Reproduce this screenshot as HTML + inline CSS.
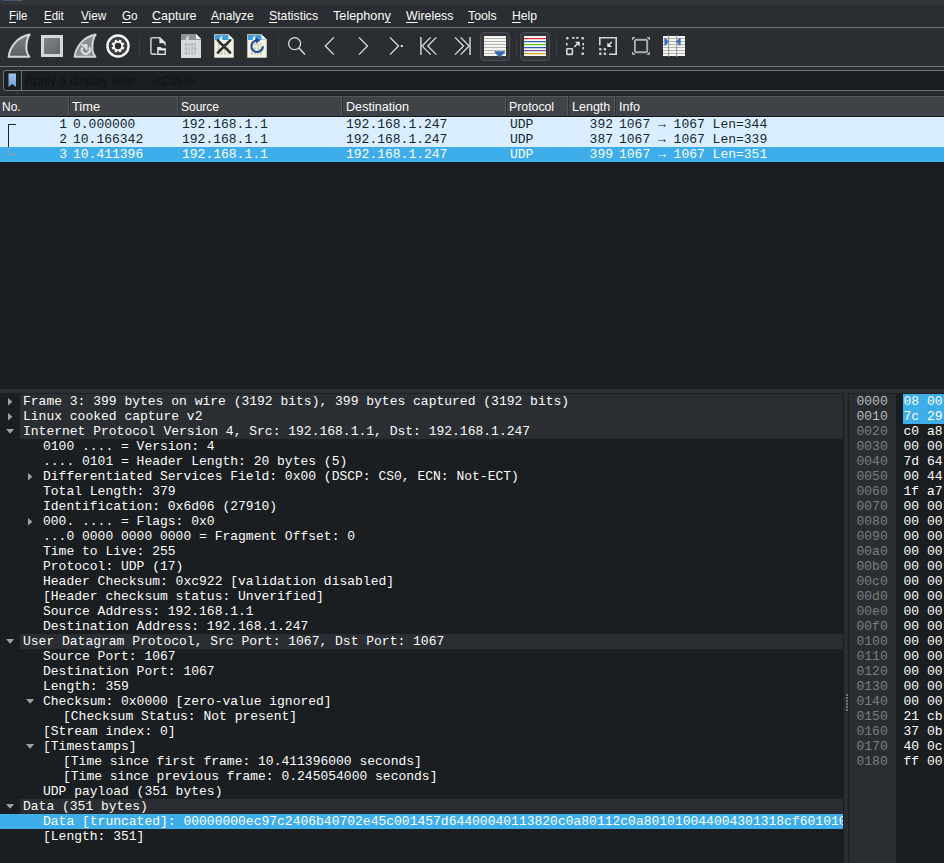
<!DOCTYPE html>
<html><head><meta charset="utf-8"><style>
*{margin:0;padding:0;box-sizing:border-box}
html,body{width:944px;height:863px;overflow:hidden;background:#2a2e32;}
body{position:relative;font-family:"Liberation Sans",sans-serif;font-size:13px;color:#fcfcfc}
.a{position:absolute}
.m{position:absolute;top:5px;height:22px;line-height:22px;white-space:pre;font-size:13.5px;transform-origin:0 0}
.m u{text-decoration:underline;text-underline-offset:2px}
.mono{font-family:"Liberation Mono",monospace;font-size:13px;white-space:pre;line-height:15px}
.h{position:absolute;top:97px;height:19px;line-height:19px;white-space:pre;font-size:13.5px;transform-origin:0 0}
.hs{position:absolute;top:96px;width:1px;height:20px;background:#53575b;box-shadow:1px 0 0 #303337}
.r{position:absolute;left:0;width:944px;height:15px}
.c{position:absolute;top:0;line-height:15px;font-family:"Liberation Mono",monospace;white-space:pre}
.t{position:absolute;left:0;height:15px;line-height:15px;font-family:"Liberation Mono",monospace;white-space:pre}
</style></head><body>
<div class="a" style="left:0;top:0;width:944px;height:5px;background:#31363b"></div>
<div class="a" style="left:3px;top:0;width:19px;height:1px;background:linear-gradient(90deg,#46597a,#44587c 45%,#545a68 55%,#565a64)"></div>
<div class="a" style="left:0;top:27px;width:944px;height:1px;background:#6e7276"></div>
<div class="a" style="left:0;top:66px;width:944px;height:1px;background:#6e7276"></div>

<div class="m" style="left:9.44px;transform:scaleX(0.8488)"><u>F</u>ile</div>
<div class="m" style="left:43.77px;transform:scaleX(0.8502)"><u>E</u>dit</div>
<div class="m" style="left:81.09px;transform:scaleX(0.8667)"><u>V</u>iew</div>
<div class="m" style="left:121.79px;transform:scaleX(0.8650)"><u>G</u>o</div>
<div class="m" style="left:151.61px;transform:scaleX(0.9272)"><u>C</u>apture</div>
<div class="m" style="left:211.39px;transform:scaleX(0.8896)"><u>A</u>nalyze</div>
<div class="m" style="left:269.00px;transform:scaleX(0.9094)"><u>S</u>tatistics</div>
<div class="m" style="left:333.35px;transform:scaleX(0.9385)">Telephon<u>y</u></div>
<div class="m" style="left:406.00px;transform:scaleX(0.9154)"><u>W</u>ireless</div>
<div class="m" style="left:468.17px;transform:scaleX(0.9128)"><u>T</u>ools</div>
<div class="m" style="left:512.04px;transform:scaleX(0.9004)"><u>H</u>elp</div>
<div class="a" style="left:3px;top:70px;width:945px;height:21px;border:1px solid #6e7276;border-radius:3px;background:#1b1e20"></div>
<div class="a" style="left:21px;top:71px;width:1px;height:19px;background:#6e7276"></div>
<svg class="a" style="left:8px;top:73px" width="9" height="15" viewBox="0 0 9 15"><defs><linearGradient id="bm" x1="0" y1="0" x2="0" y2="1"><stop offset="0" stop-color="#9cc2ec"/><stop offset="1" stop-color="#6f9edb"/></linearGradient></defs><path d="M0.5 0.5H8V14L4.25 11L0.5 14Z" fill="url(#bm)"/></svg>
<div class="a" style="left:25.1px;top:70.5px;height:19px;line-height:19px;color:#101213;white-space:pre;font-size:13.5px;transform-origin:0 0;transform:scaleX(0.9167)">Apply a display filter … &lt;Ctrl-/&gt;</div>

<div class="a" style="left:0;top:95px;width:944px;height:1px;background:#1f2225"></div>
<div class="a" style="left:0;top:96px;width:944px;height:1px;background:#55595d"></div>
<div class="a" style="left:0;top:97px;width:944px;height:19px;background:#3f4347"></div>
<div class="a" style="left:0;top:116px;width:944px;height:1px;background:#141618"></div>
<div class="h" style="left:2.30px;transform:scaleX(0.8874)">No.</div>
<div class="hs" style="left:68px"></div>
<div class="h" style="left:71.70px;transform:scaleX(0.9518)">Time</div>
<div class="hs" style="left:177px"></div>
<div class="h" style="left:181.00px;transform:scaleX(0.8886)">Source</div>
<div class="hs" style="left:341px"></div>
<div class="h" style="left:345.53px;transform:scaleX(0.9346)">Destination</div>
<div class="hs" style="left:505px"></div>
<div class="h" style="left:509.23px;transform:scaleX(0.9106)">Protocol</div>
<div class="hs" style="left:567px"></div>
<div class="h" style="left:571.52px;transform:scaleX(0.9273)">Length</div>
<div class="hs" style="left:614px"></div>
<div class="h" style="left:618.50px;transform:scaleX(0.9384)">Info</div>
<div class="a" style="left:0;top:117px;width:944px;height:272px;background:#1b1e20"></div>
<div class="r" style="top:117px;background:#daeeff;color:#12272e"><div class="c" style="right:877px">1</div><div class="c" style="left:73px">0.000000</div><div class="c" style="left:182px">192.168.1.1</div><div class="c" style="left:346px">192.168.1.247</div><div class="c" style="left:510px">UDP</div><div class="c" style="right:331px">392</div><div class="c" style="left:619px">1067 → 1067 Len=344</div></div>
<div class="r" style="top:132px;background:#daeeff;color:#12272e"><div class="c" style="right:877px">2</div><div class="c" style="left:73px">10.166342</div><div class="c" style="left:182px">192.168.1.1</div><div class="c" style="left:346px">192.168.1.247</div><div class="c" style="left:510px">UDP</div><div class="c" style="right:331px">387</div><div class="c" style="left:619px">1067 → 1067 Len=339</div></div>
<div class="r" style="top:147px;background:#3daee9;color:#fcfcfc"><div class="c" style="right:877px">3</div><div class="c" style="left:73px">10.411396</div><div class="c" style="left:182px">192.168.1.1</div><div class="c" style="left:346px">192.168.1.247</div><div class="c" style="left:510px">UDP</div><div class="c" style="right:331px">399</div><div class="c" style="left:619px">1067 → 1067 Len=351</div></div>
<div class="a" style="left:8px;top:124px;width:8px;height:1px;background:#12272e"></div>
<div class="a" style="left:8px;top:124px;width:1px;height:23px;background:#12272e"></div>
<div class="a" style="left:8px;top:147px;width:1px;height:8px;background:#9a9a9a"></div>
<div class="a" style="left:8px;top:154px;width:8px;height:1px;background:#9a9a9a"></div>
<div class="a" style="left:0;top:389px;width:944px;height:5px;background:#2a2e32"></div>
<div class="a" style="left:0;top:393px;width:944px;height:1px;background:#1e2124"></div>
<div class="a" style="left:0;top:394px;width:843px;height:469px;background:#1b1e20;overflow:hidden">
<div class="a" style="left:20px;top:0px;width:823px;height:15px;background:#2a2e32"></div>
<svg class="a" style="left:8px;top:3.8px" width="6" height="8"><path d="M0 0L4.4 3.7L0 7.4Z" fill="#a0a2a4"/></svg>
<div class="t" style="left:23px;top:0px">Frame 3: 399 bytes on wire (3192 bits), 399 bytes captured (3192 bits)</div>
<div class="a" style="left:20px;top:15px;width:823px;height:15px;background:#2a2e32"></div>
<svg class="a" style="left:8px;top:18.8px" width="6" height="8"><path d="M0 0L4.4 3.7L0 7.4Z" fill="#a0a2a4"/></svg>
<div class="t" style="left:23px;top:15px">Linux cooked capture v2</div>
<div class="a" style="left:20px;top:30px;width:823px;height:15px;background:#2a2e32"></div>
<svg class="a" style="left:6px;top:34.8px" width="9" height="6"><path d="M0 0H8.2L4.1 4.8Z" fill="#a0a2a4"/></svg>
<div class="t" style="left:23px;top:30px">Internet Protocol Version 4, Src: 192.168.1.1, Dst: 192.168.1.247</div>
<div class="t" style="left:43px;top:45px">0100 .... = Version: 4</div>
<div class="t" style="left:43px;top:60px">.... 0101 = Header Length: 20 bytes (5)</div>
<svg class="a" style="left:28px;top:78.8px" width="6" height="8"><path d="M0 0L4.4 3.7L0 7.4Z" fill="#a0a2a4"/></svg>
<div class="t" style="left:43px;top:75px">Differentiated Services Field: 0x00 (DSCP: CS0, ECN: Not-ECT)</div>
<div class="t" style="left:43px;top:90px">Total Length: 379</div>
<div class="t" style="left:43px;top:105px">Identification: 0x6d06 (27910)</div>
<svg class="a" style="left:28px;top:123.8px" width="6" height="8"><path d="M0 0L4.4 3.7L0 7.4Z" fill="#a0a2a4"/></svg>
<div class="t" style="left:43px;top:120px">000. .... = Flags: 0x0</div>
<div class="t" style="left:43px;top:135px">...0 0000 0000 0000 = Fragment Offset: 0</div>
<div class="t" style="left:43px;top:150px">Time to Live: 255</div>
<div class="t" style="left:43px;top:165px">Protocol: UDP (17)</div>
<div class="t" style="left:43px;top:180px">Header Checksum: 0xc922 [validation disabled]</div>
<div class="t" style="left:43px;top:195px">[Header checksum status: Unverified]</div>
<div class="t" style="left:43px;top:210px">Source Address: 192.168.1.1</div>
<div class="t" style="left:43px;top:225px">Destination Address: 192.168.1.247</div>
<div class="a" style="left:20px;top:240px;width:823px;height:15px;background:#2a2e32"></div>
<svg class="a" style="left:6px;top:244.8px" width="9" height="6"><path d="M0 0H8.2L4.1 4.8Z" fill="#a0a2a4"/></svg>
<div class="t" style="left:23px;top:240px">User Datagram Protocol, Src Port: 1067, Dst Port: 1067</div>
<div class="t" style="left:43px;top:255px">Source Port: 1067</div>
<div class="t" style="left:43px;top:270px">Destination Port: 1067</div>
<div class="t" style="left:43px;top:285px">Length: 359</div>
<svg class="a" style="left:26px;top:304.8px" width="9" height="6"><path d="M0 0H8.2L4.1 4.8Z" fill="#a0a2a4"/></svg>
<div class="t" style="left:43px;top:300px">Checksum: 0x0000 [zero-value ignored]</div>
<div class="t" style="left:63px;top:315px">[Checksum Status: Not present]</div>
<div class="t" style="left:43px;top:330px">[Stream index: 0]</div>
<svg class="a" style="left:26px;top:349.8px" width="9" height="6"><path d="M0 0H8.2L4.1 4.8Z" fill="#a0a2a4"/></svg>
<div class="t" style="left:43px;top:345px">[Timestamps]</div>
<div class="t" style="left:63px;top:360px">[Time since first frame: 10.411396000 seconds]</div>
<div class="t" style="left:63px;top:375px">[Time since previous frame: 0.245054000 seconds]</div>
<div class="t" style="left:43px;top:390px">UDP payload (351 bytes)</div>
<div class="a" style="left:20px;top:405px;width:823px;height:15px;background:#2a2e32"></div>
<svg class="a" style="left:6px;top:409.8px" width="9" height="6"><path d="M0 0H8.2L4.1 4.8Z" fill="#a0a2a4"/></svg>
<div class="t" style="left:23px;top:405px">Data (351 bytes)</div>
<div class="a" style="left:0;top:420px;width:843px;height:15px;background:#3daee9"></div>
<div class="t" style="left:43px;top:420px">Data [truncated]: 00000000ec97c2406b40702e45c001457d64400040113820c0a80112c0a801010044004301318cf601010</div>
<div class="t" style="left:43px;top:435px">[Length: 351]</div>
</div>
<div class="a" style="left:843px;top:393px;width:6px;height:470px;background:#2a2e32;border-left:1px solid #1b1e20;border-right:1px solid #1e2124"></div>
<div class="a" style="left:846px;top:694px;width:2px;height:2px;background:#727476"></div>
<div class="a" style="left:846px;top:697px;width:2px;height:2px;background:#727476"></div>
<div class="a" style="left:846px;top:700px;width:2px;height:2px;background:#727476"></div>
<div class="a" style="left:846px;top:703px;width:2px;height:2px;background:#727476"></div>
<div class="a" style="left:846px;top:706px;width:2px;height:2px;background:#727476"></div>
<div class="a" style="left:846px;top:709px;width:2px;height:2px;background:#727476"></div>
<div class="a" style="left:849px;top:394px;width:95px;height:469px;background:#1b1e20"></div>
<div class="a" style="left:849px;top:394px;width:47px;height:469px;background:#2a2e32"></div>
<div class="a" style="left:903px;top:394px;width:41px;height:30px;background:#3daee9"></div>
<div class="t" style="left:856.5px;top:394px;color:#bcbec0">0000</div>
<div class="t" style="left:903.5px;top:394px">08 00 45 00</div>
<div class="t" style="left:856.5px;top:409px;color:#bcbec0">0010</div>
<div class="t" style="left:903.5px;top:409px">7c 29 40 00</div>
<div class="t" style="left:856.5px;top:424px;color:#7a7e82">0020</div>
<div class="t" style="left:903.5px;top:424px">c0 a8</div>
<div class="t" style="left:856.5px;top:439px;color:#7a7e82">0030</div>
<div class="t" style="left:903.5px;top:439px">00 00</div>
<div class="t" style="left:856.5px;top:454px;color:#7a7e82">0040</div>
<div class="t" style="left:903.5px;top:454px">7d 64</div>
<div class="t" style="left:856.5px;top:469px;color:#7a7e82">0050</div>
<div class="t" style="left:903.5px;top:469px">00 44</div>
<div class="t" style="left:856.5px;top:484px;color:#7a7e82">0060</div>
<div class="t" style="left:903.5px;top:484px">1f a7</div>
<div class="t" style="left:856.5px;top:499px;color:#7a7e82">0070</div>
<div class="t" style="left:903.5px;top:499px">00 00</div>
<div class="t" style="left:856.5px;top:514px;color:#7a7e82">0080</div>
<div class="t" style="left:903.5px;top:514px">00 00</div>
<div class="t" style="left:856.5px;top:529px;color:#7a7e82">0090</div>
<div class="t" style="left:903.5px;top:529px">00 00</div>
<div class="t" style="left:856.5px;top:544px;color:#7a7e82">00a0</div>
<div class="t" style="left:903.5px;top:544px">00 00</div>
<div class="t" style="left:856.5px;top:559px;color:#7a7e82">00b0</div>
<div class="t" style="left:903.5px;top:559px">00 00</div>
<div class="t" style="left:856.5px;top:574px;color:#7a7e82">00c0</div>
<div class="t" style="left:903.5px;top:574px">00 00</div>
<div class="t" style="left:856.5px;top:589px;color:#7a7e82">00d0</div>
<div class="t" style="left:903.5px;top:589px">00 00</div>
<div class="t" style="left:856.5px;top:604px;color:#7a7e82">00e0</div>
<div class="t" style="left:903.5px;top:604px">00 00</div>
<div class="t" style="left:856.5px;top:619px;color:#7a7e82">00f0</div>
<div class="t" style="left:903.5px;top:619px">00 00</div>
<div class="t" style="left:856.5px;top:634px;color:#7a7e82">0100</div>
<div class="t" style="left:903.5px;top:634px">00 00</div>
<div class="t" style="left:856.5px;top:649px;color:#7a7e82">0110</div>
<div class="t" style="left:903.5px;top:649px">00 00</div>
<div class="t" style="left:856.5px;top:664px;color:#7a7e82">0120</div>
<div class="t" style="left:903.5px;top:664px">00 00</div>
<div class="t" style="left:856.5px;top:679px;color:#7a7e82">0130</div>
<div class="t" style="left:903.5px;top:679px">00 00</div>
<div class="t" style="left:856.5px;top:694px;color:#7a7e82">0140</div>
<div class="t" style="left:903.5px;top:694px">00 00</div>
<div class="t" style="left:856.5px;top:709px;color:#7a7e82">0150</div>
<div class="t" style="left:903.5px;top:709px">21 cb</div>
<div class="t" style="left:856.5px;top:724px;color:#7a7e82">0160</div>
<div class="t" style="left:903.5px;top:724px">37 0b</div>
<div class="t" style="left:856.5px;top:739px;color:#7a7e82">0170</div>
<div class="t" style="left:903.5px;top:739px">40 0c</div>
<div class="t" style="left:856.5px;top:754px;color:#7a7e82">0180</div>
<div class="t" style="left:903.5px;top:754px">ff 00</div>
<svg class="a" style="left:0;top:28px" width="944" height="38" viewBox="0 28 944 38">
<defs>
<linearGradient id="gfin" x1="0" y1="0" x2="0" y2="1"><stop offset="0" stop-color="#7c8084"/><stop offset="1" stop-color="#5d6165"/></linearGradient>
<linearGradient id="gsq" x1="0" y1="0" x2="1" y2="1"><stop offset="0" stop-color="#84888c"/><stop offset="1" stop-color="#5f6367"/></linearGradient>
</defs>
<!-- start fin -->
<path d="M8.6 56.8C10 46.5 17 37.2 29.6 34.6C26.8 38.5 26.2 45 26.4 49.5C26.6 52.5 28 55 29.4 56.8Z" fill="url(#gfin)" stroke="#d5d8db" stroke-width="2" stroke-linejoin="round"/>
<!-- stop -->
<rect x="42.5" y="36.5" width="19" height="19" fill="url(#gsq)" stroke="#d5d8db" stroke-width="3"/>
<!-- restart fin -->
<path d="M74.6 56.8C76 46.5 83 37.2 95.6 34.6C92.8 38.5 92.2 45 92.4 49.5C92.6 52.5 94 55 95.4 56.8Z" fill="#8a8e92" stroke="#d0d3d6" stroke-width="2" stroke-linejoin="round"/>
<path d="M82.4 47.6A4.1 4.1 0 1 0 89.2 47.4" fill="none" stroke="#dcdfe2" stroke-width="2.1"/>
<path d="M80.6 44.2H87.5V50.8Z" fill="#dcdfe2"/>
<!-- gear -->
<circle cx="118" cy="46" r="10.55" fill="#3b3c3e" stroke="#f6f6f6" stroke-width="2.4"/>
<g fill="#f4f4f4" transform="rotate(22.5 118 46)">
<circle cx="118" cy="46" r="5.1"/>
<rect x="116.7" y="39.6" width="2.6" height="12.8"/>
<rect x="111.6" y="44.7" width="12.8" height="2.6"/>
<rect x="116.7" y="39.6" width="2.6" height="12.8" transform="rotate(45 118 46)"/>
<rect x="116.7" y="39.6" width="2.6" height="12.8" transform="rotate(-45 118 46)"/>
</g>
<circle cx="118" cy="46" r="3.2" fill="#2c2d2f"/>
<!-- separator -->
<rect x="139" y="37" width="1" height="19" fill="#383c40"/>
<!-- open -->
<path d="M156.6 54.1H152.2Q150.9 54.1 150.9 52.8V39Q150.9 37.7 152.2 37.7H159.8L165 42.9V45.6" fill="none" stroke="#c6c9cc" stroke-width="1.6" stroke-linejoin="round"/>
<path d="M159.4 37.2V43.3H165.5Z" fill="#e4e6e8"/>
<path d="M157.2 47H160.8L161.8 48.2H165.9V54.9H157.2Z" fill="#e6e8ea"/>
<rect x="158.6" y="50.4" width="6" height="3.3" fill="#2e3236"/>
<!-- save (binary doc) -->
<path d="M181 34H196L201 39V58H181Z" fill="#d8dbde"/>
<path d="M181 34H196L201 39V40H181Z" fill="#8d9195"/>
<path d="M186 40C186 37 187.5 35.5 189.5 35.3C188 37 188.2 39 189 40Z" fill="#d8dbde"/>
<path d="M196 34V39H201Z" fill="#eef0f2"/>
<g><rect x="185.25" y="43.25" width="1.6" height="2.6" rx="0.6" fill="none" stroke="#a3a7ab" stroke-width="0.9"/><rect x="188.60" y="42.80" width="1" height="3.5" fill="#a3a7ab"/><rect x="191.25" y="43.25" width="1.6" height="2.6" rx="0.6" fill="none" stroke="#a3a7ab" stroke-width="0.9"/><rect x="194.60" y="42.80" width="1" height="3.5" fill="#a3a7ab"/><rect x="185.25" y="47.55" width="1.6" height="2.6" rx="0.6" fill="none" stroke="#a3a7ab" stroke-width="0.9"/><rect x="188.60" y="47.10" width="1" height="3.5" fill="#a3a7ab"/><rect x="191.60" y="47.10" width="1" height="3.5" fill="#a3a7ab"/><rect x="194.25" y="47.55" width="1.6" height="2.6" rx="0.6" fill="none" stroke="#a3a7ab" stroke-width="0.9"/><rect x="185.25" y="51.85" width="1.6" height="2.6" rx="0.6" fill="none" stroke="#a3a7ab" stroke-width="0.9"/><rect x="188.60" y="51.40" width="1" height="3.5" fill="#a3a7ab"/><rect x="191.60" y="51.40" width="1" height="3.5" fill="#a3a7ab"/><rect x="194.60" y="51.40" width="1" height="3.5" fill="#a3a7ab"/></g>
<!-- close -->
<path d="M214.5 34.5H228.5L233.5 39.5V57.5H214.5Z" fill="#f3f3e6" stroke="#b9b9a9" stroke-width="1"/>
<path d="M215 35H228.5L232.5 39V40H215Z" fill="#3d9fe0"/>
<path d="M219.5 40C219.5 37.5 221 36 223 35.8C221.5 37.5 221.7 39 222.5 40Z" fill="#f3f3e6"/>
<path d="M228.5 34.5V39.5H233.5Z" fill="#f8f8f0"/>
<g><rect x="218.05" y="43.25" width="1.6" height="2.6" rx="0.6" fill="none" stroke="#b5b5a5" stroke-width="0.9"/><rect x="221.40" y="42.80" width="1" height="3.5" fill="#b5b5a5"/><rect x="224.05" y="43.25" width="1.6" height="2.6" rx="0.6" fill="none" stroke="#b5b5a5" stroke-width="0.9"/><rect x="227.40" y="42.80" width="1" height="3.5" fill="#b5b5a5"/><rect x="218.05" y="47.55" width="1.6" height="2.6" rx="0.6" fill="none" stroke="#b5b5a5" stroke-width="0.9"/><rect x="221.40" y="47.10" width="1" height="3.5" fill="#b5b5a5"/><rect x="224.40" y="47.10" width="1" height="3.5" fill="#b5b5a5"/><rect x="227.05" y="47.55" width="1.6" height="2.6" rx="0.6" fill="none" stroke="#b5b5a5" stroke-width="0.9"/><rect x="218.05" y="51.85" width="1.6" height="2.6" rx="0.6" fill="none" stroke="#b5b5a5" stroke-width="0.9"/><rect x="221.40" y="51.40" width="1" height="3.5" fill="#b5b5a5"/><rect x="224.40" y="51.40" width="1" height="3.5" fill="#b5b5a5"/><rect x="227.40" y="51.40" width="1" height="3.5" fill="#b5b5a5"/></g>
<path d="M217.8 40.3L230.2 52.7M230.2 40.3L217.8 52.7" stroke="#2b2f33" stroke-width="2.5" stroke-linecap="round"/>
<!-- reload -->
<path d="M247.5 34.5H261.5L266.5 39.5V57.5H247.5Z" fill="#f3f3e6" stroke="#b9b9a9" stroke-width="1"/>
<path d="M248 35H261.5L265.5 39V40H248Z" fill="#3d9fe0"/>
<path d="M252.5 40C252.5 37.5 254 36 256 35.8C254.5 37.5 254.7 39 255.5 40Z" fill="#f3f3e6"/>
<path d="M261.5 34.5V39.5H266.5Z" fill="#f8f8f0"/>
<g><rect x="251.05" y="43.25" width="1.6" height="2.6" rx="0.6" fill="none" stroke="#b5b5a5" stroke-width="0.9"/><rect x="254.40" y="42.80" width="1" height="3.5" fill="#b5b5a5"/><rect x="257.05" y="43.25" width="1.6" height="2.6" rx="0.6" fill="none" stroke="#b5b5a5" stroke-width="0.9"/><rect x="260.40" y="42.80" width="1" height="3.5" fill="#b5b5a5"/><rect x="251.05" y="47.55" width="1.6" height="2.6" rx="0.6" fill="none" stroke="#b5b5a5" stroke-width="0.9"/><rect x="254.40" y="47.10" width="1" height="3.5" fill="#b5b5a5"/><rect x="257.40" y="47.10" width="1" height="3.5" fill="#b5b5a5"/><rect x="260.05" y="47.55" width="1.6" height="2.6" rx="0.6" fill="none" stroke="#b5b5a5" stroke-width="0.9"/><rect x="251.05" y="51.85" width="1.6" height="2.6" rx="0.6" fill="none" stroke="#b5b5a5" stroke-width="0.9"/><rect x="254.40" y="51.40" width="1" height="3.5" fill="#b5b5a5"/><rect x="257.40" y="51.40" width="1" height="3.5" fill="#b5b5a5"/><rect x="260.40" y="51.40" width="1" height="3.5" fill="#b5b5a5"/></g>
<path d="M257.2 40.4A5.8 5.8 0 1 0 263 46.2" fill="none" stroke="#1f4c98" stroke-width="2.1"/>
<path d="M255.9 37.3L260.2 40.4L255.9 43.5Z" fill="#1f4c98"/>
<!-- separator -->
<rect x="278" y="37" width="1" height="19" fill="#383c40"/>
<!-- search -->
<circle cx="294.6" cy="43.6" r="6" fill="none" stroke="#dcdee0" stroke-width="1.3"/>
<path d="M299 48L305 54.5" stroke="#dcdee0" stroke-width="1.4"/>
<!-- back -->
<path d="M333.8 37.4L325.3 46L333.8 54.6" fill="none" stroke="#dcdee0" stroke-width="1.3"/>
<!-- forward -->
<path d="M359 37.4L367.5 46L359 54.6" fill="none" stroke="#dcdee0" stroke-width="1.3"/>
<!-- goto -->
<path d="M390 37.4L398.5 46L390 54.6" fill="none" stroke="#dcdee0" stroke-width="1.3"/>
<rect x="400.8" y="45" width="2" height="2" fill="#f0f0f0"/>
<!-- first -->
<path d="M420.9 37V55" stroke="#dcdee0" stroke-width="1.4"/>
<path d="M430.6 37.4L422.1 46L430.6 54.6M436.3 37.4L427.8 46L436.3 54.6" fill="none" stroke="#dcdee0" stroke-width="1.3"/>
<!-- last -->
<path d="M470 37V55" stroke="#dcdee0" stroke-width="1.4"/>
<path d="M455 37.4L463.5 46L455 54.6M460.6 37.4L469.1 46L460.6 54.6" fill="none" stroke="#dcdee0" stroke-width="1.3"/>
<!-- autoscroll toggle -->
<rect x="480.5" y="32.5" width="29" height="28" rx="3.5" fill="#33373b" stroke="#4a4e52" stroke-width="1"/>
<rect x="484" y="36" width="22" height="20" fill="#f4f4f2"/>
<g fill="#b5b5ab"><rect x="484" y="38" width="22" height="1"/><rect x="484" y="41" width="22" height="1"/><rect x="484" y="44" width="22" height="1"/><rect x="484" y="47" width="22" height="1"/><rect x="484" y="50" width="22" height="1"/><rect x="484" y="53" width="22" height="1"/></g>
<path d="M495.2 51.3H504.2Q505.6 51.3 504.8 52.3L500.4 56.9Q499.6 57.7 498.8 56.9L494.6 52.3Q493.8 51.3 495.2 51.3Z" fill="#3567b2"/>
<!-- separator -->
<rect x="516" y="37" width="1" height="19" fill="#383c40"/>
<!-- colorize toggle -->
<rect x="520.5" y="32.5" width="29" height="28" rx="3.5" fill="#33373b" stroke="#4a4e52" stroke-width="1"/>
<rect x="524" y="36" width="22" height="20" fill="#f6f6f4"/>
<rect x="524" y="38" width="22" height="1.2" fill="#e03030"/>
<rect x="524" y="41" width="22" height="1.2" fill="#2a5fb0"/>
<rect x="524" y="44" width="22" height="1.2" fill="#5cc81e"/>
<rect x="524" y="47" width="22" height="1.2" fill="#2a5fb0"/>
<rect x="524" y="50" width="22" height="1.2" fill="#7a4a90"/>
<rect x="524" y="53" width="22" height="1.2" fill="#d8a018"/>
<!-- separator -->
<rect x="556" y="37" width="1" height="19" fill="#383c40"/>
<!-- zoom in -->
<g fill="#d4d7da">
<rect x="566" y="37" width="2.6" height="2.6" rx="1"/><rect x="572" y="37" width="2.6" height="1.6"/><rect x="576" y="37" width="2.6" height="1.6"/><rect x="581.4" y="37" width="2.6" height="2.6" rx="1"/>
<rect x="566" y="43" width="1.6" height="2.4"/><rect x="582.4" y="43" width="1.6" height="2.4"/><rect x="582.4" y="47" width="1.6" height="2.4"/><rect x="581.4" y="52.4" width="2.6" height="2.6" rx="1"/>
</g>
<rect x="566.8" y="48.8" width="5.6" height="5.6" rx="0.6" fill="none" stroke="#d4d7da" stroke-width="1.6"/>
<path d="M574.3 47L577.8 43.5" stroke="#e6e8ea" stroke-width="1.3"/>
<path d="M575 41.7H579.7V46.4Z" fill="#e6e8ea"/>
<!-- zoom out -->
<path d="M599.8 45.5V37.8H616.2V54.2H609" fill="none" stroke="#d4d7da" stroke-width="1.6"/>
<g fill="#cfd2d5"><rect x="599" y="48" width="2.6" height="2.6" rx="1"/><rect x="603.6" y="48" width="2.6" height="2.6" rx="1"/><rect x="599" y="52.4" width="2.6" height="2.6" rx="1"/><rect x="603.6" y="52.4" width="2.6" height="2.6" rx="1"/></g>
<path d="M611.8 42L608.3 45.5" stroke="#e6e8ea" stroke-width="1.3"/>
<path d="M607.3 42.4V47.1H612Z" fill="#e6e8ea"/>
<!-- normal size -->
<rect x="634.9" y="39.7" width="12.3" height="12.6" rx="1.6" fill="none" stroke="#a9aeb2" stroke-width="1.9"/>
<g fill="#b9bdc1"><path d="M632 40.6V38.2Q632 37 633.2 37H635.6Z"/><path d="M650 40.6V38.2Q650 37 648.8 37H646.4Z"/><path d="M632 51.4V53.8Q632 55 633.2 55H635.6Z"/><path d="M650 51.4V53.8Q650 55 648.8 55H646.4Z"/></g>
<!-- resize columns -->
<rect x="663" y="36" width="22" height="20" fill="#f4f4f2"/>
<g fill="#b5b5ab"><rect x="663" y="38" width="22" height="1"/><rect x="663" y="41" width="22" height="1"/><rect x="663" y="44" width="22" height="1"/><rect x="663" y="47" width="22" height="1"/><rect x="663" y="50" width="22" height="1"/><rect x="663" y="53" width="22" height="1"/></g>
<rect x="668.2" y="35" width="1" height="22" fill="#8f9090"/><rect x="676.2" y="35" width="1" height="22" fill="#8f9090"/>
<path d="M665 38.5L668 41.5L665 45Z" fill="#3a72c0" stroke="#3a72c0" stroke-width="1.3" stroke-linejoin="round"/>
<path d="M680 38.5L677 41.5L680 45Z" fill="#3a72c0" stroke="#3a72c0" stroke-width="1.3" stroke-linejoin="round"/>
</svg>

</body></html>
